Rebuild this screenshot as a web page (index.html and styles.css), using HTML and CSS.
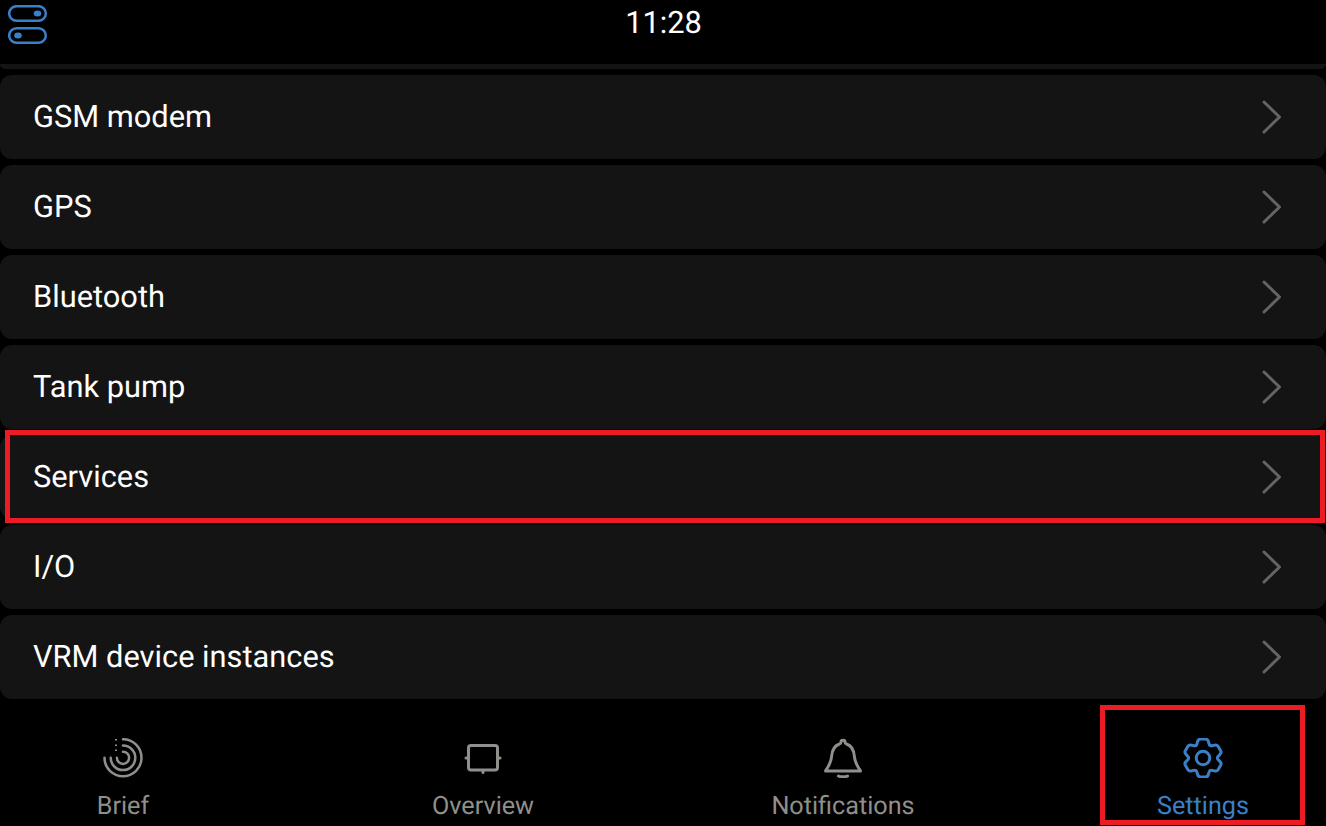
FILE: index.html
```html
<!DOCTYPE html>
<html lang="en">
<head>
<meta charset="UTF-8">
<meta name="viewport" content="width=device-width, initial-scale=1.0">
<title>Settings</title>
<link rel="stylesheet" href="styles.css">
</head>
<body>

<div class="screen">
  <header class="status-bar">
    <svg class="toggles" width="40" height="40" viewBox="0 0 40 40">
      <rect x="1.2" y="1.2" width="36.6" height="14.6" rx="7.3"/>
      <rect x="1.2" y="23.2" width="36.6" height="14.6" rx="7.3"/>
      <ellipse class="dot" cx="29.5" cy="8.5" rx="3.8" ry="3"/>
      <ellipse class="dot" cx="10" cy="30.5" rx="3.8" ry="3"/>
    </svg>
    <div class="clock">11:28</div>
  </header>

  <div class="list">
    <div class="row-cut"></div>
    <div class="row"><span>GSM modem</span><svg class="chevron" width="20" height="34" viewBox="0 0 20 34"><path d="M2 2l15.500 15L2 32"/></svg></div>
    <div class="row"><span>GPS</span><svg class="chevron" width="20" height="34" viewBox="0 0 20 34"><path d="M2 2l15.500 15L2 32"/></svg></div>
    <div class="row"><span>Bluetooth</span><svg class="chevron" width="20" height="34" viewBox="0 0 20 34"><path d="M2 2l15.500 15L2 32"/></svg></div>
    <div class="row"><span>Tank pump</span><svg class="chevron" width="20" height="34" viewBox="0 0 20 34"><path d="M2 2l15.500 15L2 32"/></svg></div>
    <div class="row marked"><span>Services</span><svg class="chevron" width="20" height="34" viewBox="0 0 20 34"><path d="M2 2l15.500 15L2 32"/></svg></div>
    <div class="row"><span>I/O</span><svg class="chevron" width="20" height="34" viewBox="0 0 20 34"><path d="M2 2l15.500 15L2 32"/></svg></div>
    <div class="row"><span>VRM device instances</span><svg class="chevron" width="20" height="34" viewBox="0 0 20 34"><path d="M2 2l15.500 15L2 32"/></svg></div>
  </div>

  <nav class="tabs">
    <div class="tab">
      <svg class="tab-icon thin" width="40" height="40" viewBox="0 0 40 40">
        <path d="M20 1.300A18.500 18.500 0 1 1 1.500 19.800"/>
        <path d="M20 7.500A12.300 12.300 0 1 1 7.700 19.800"/>
        <path d="M20 13.700A6.100 6.100 0 1 1 13.900 19.800"/>
        <path class="dots" d="M13 1v1.500M13 6.500v1.500M13 11.500v1.500"/>
      </svg>
      <span>Brief</span>
    </div>
    <div class="tab">
      <svg class="tab-icon" width="40" height="40" viewBox="0 0 40 40">
        <rect x="5.500" y="7.500" width="29" height="24.500" rx="2.500"/>
        <path d="M3 20h2M35 20h2M20 33v1.500"/>
      </svg>
      <span>Overview</span>
    </div>
    <div class="tab">
      <svg class="tab-icon" width="40" height="40" viewBox="0 0 40 40">
        <path d="M2.500 33c3-4.500 5.500-8 6-14 .5-7 3-11.500 8-13 1-.3 1.500-1 1.500-2 0-1 1-1.800 2-1.800s2 .8 2 1.800c0 1 .5 1.700 1.500 2 5 1.500 7.500 6 8 13 .5 6 3 9.500 6 14z"/>
        <path d="M15.500 38c2 1 7 1 9 0"/>
      </svg>
      <span>Notifications</span>
    </div>
    <div class="tab active">
      <svg class="tab-icon" width="40" height="40" viewBox="-20 -20 40 40">
        <defs><path id="lobe" d="M-7.200 -12.500C-4.800 -13.600-6.800-18.900-2.600-18.900H2.600C6.800-18.900 4.800-13.600 7.200-12.500"/></defs>
        <use href="#lobe"/>
        <use href="#lobe" transform="rotate(60)"/>
        <use href="#lobe" transform="rotate(120)"/>
        <use href="#lobe" transform="rotate(180)"/>
        <use href="#lobe" transform="rotate(240)"/>
        <use href="#lobe" transform="rotate(300)"/>
        <circle r="6.800"/>
      </svg>
      <span>Settings</span>
    </div>
    <div class="tab-mark"></div>
  </nav>
</div>

</body>
</html>
```

FILE: styles.css
```css
html, body {
  margin: 0;
  padding: 0;
  background-color: #000;
}

.screen {
  width: 1326px;
  height: 826px;
  overflow: hidden;
  display: flex;
  flex-direction: column;
  font-family: Roboto, "Liberation Sans", sans-serif;
  text-rendering: geometricPrecision;
  color: #fff;
}

.status-bar {
  height: 64px;
  box-sizing: border-box;
  padding: 5px 0 0 8px;
  display: grid;
  grid-template-columns: 1fr auto 1fr;
}

.toggles {
  fill: none;
  stroke: #3a80c8;
  stroke-width: 2.5;
}

.toggles .dot {
  fill: #3a80c8;
  stroke: none;
}

.clock {
  font-size: 30.800px;
  line-height: 36px;
  margin-left: -7px;
}

.list {
  display: flex;
  flex-direction: column;
  gap: 6px;
}

.row-cut {
  height: 5px;
  background-color: #141414;
  border-radius: 0 0 12px 12px;
}

.row {
  position: relative;
  height: 84px;
  box-sizing: border-box;
  padding: 0 44px 2px 33px;
  display: flex;
  justify-content: space-between;
  align-items: center;
  background-color: #141414;
  border-radius: 12px;
  font-size: 30.800px;
}

.row .chevron {
  margin-top: 2px;
}

.row.marked::after {
  content: "";
  position: absolute;
  left: 5px;
  right: 1px;
  top: -5px;
  bottom: -4px;
  border: 5px solid #ed1c24;
}

.chevron {
  fill: none;
  stroke: #646464;
  stroke-width: 3;
  stroke-linecap: round;
  stroke-linejoin: round;
}

.tabs {
  position: relative;
  flex: 1;
  padding: 39px 0 0 3px;
  display: grid;
  grid-template-columns: repeat(4, 240px);
  column-gap: 120px;
}

.tab {
  display: flex;
  flex-direction: column;
  align-items: center;
  gap: 15px;
  font-size: 25.200px;
  line-height: 28px;
  color: #8f8f8b;
}

.tab-icon {
  fill: none;
  stroke: currentColor;
  stroke-width: 3;
  stroke-linecap: round;
  stroke-linejoin: round;
}

.tab-icon.thin {
  stroke-width: 2.500;
}

.tab-icon .dots {
  stroke-width: 2;
  stroke-linecap: butt;
}

.tab.active {
  color: #3a80c8;
}

.tab-mark {
  position: absolute;
  left: 1100px;
  top: 6px;
  width: 205px;
  height: 120px;
  box-sizing: border-box;
  border: 5px solid #ed1c24;
}
```
